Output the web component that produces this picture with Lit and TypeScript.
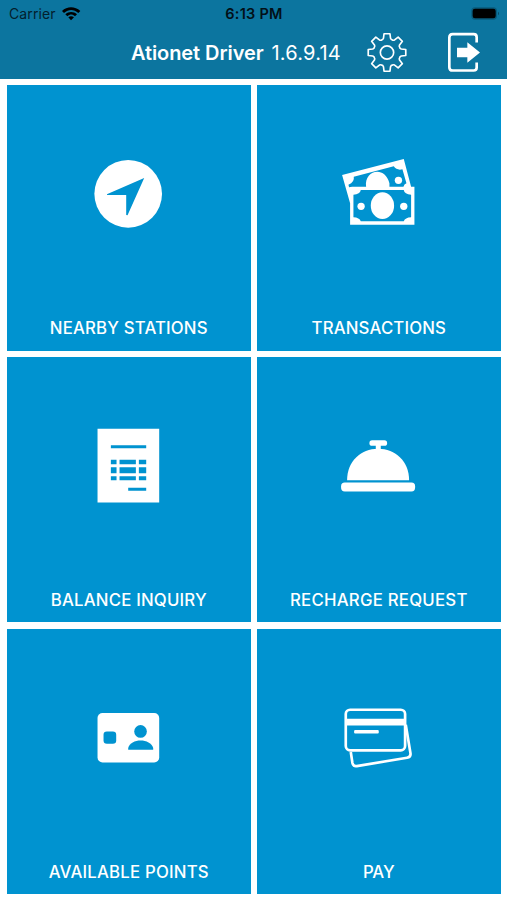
import { LitElement, html, svg, css } from "lit";
import { customElement } from "lit/decorators.js";

function gearPath(cx: number, cy: number): string {
  const parts: string[] = [];
  const at = (deg: number, r: number) => {
    const a = ((deg - 90) * Math.PI) / 180;
    return `${(cx + r * Math.cos(a)).toFixed(1)} ${(cy + r * Math.sin(a)).toFixed(1)}`;
  };
  for (let i = 0; i < 8; i++) {
    const d = i * 45;
    parts.push(`${i ? "L" : "M"}${at(d - 9, 57)}L${at(d + 9, 57)}L${at(d + 14, 44)}Q${at(d + 18, 40)} ${at(d + 22.5, 41)}Q${at(d + 27, 40)} ${at(d + 31, 44)}`);
  }
  return parts.join("") + "Z";
}

const tiles = [
  {
    label: "NEARBY STATIONS", spacing: 0.16, box: "-3.6 -3 270 270",
    icon: svg`<circle cx="129" cy="131.500" r="101.500"/><path class="cut" d="M177 84 L65 133 L66 135 H123 V195 L127 196 Z"/>`,
  },
  {
    label: "TRANSACTIONS", spacing: 0.14, box: "11.7 -3 270 270",
    icon: svg`<path d="M36 75 L221 27 L243 110 L253 110 V224 H60 V160 Z"/>
      <path class="cut" d="M55 104 Q74 96 71 80 L191 49 Q200 62 217 58 L229 100 Q222 102 220 110 H66 L57 112 Z"/>
      <path d="M108 110 C101 60 165 45 178 100 L178 112 H108 Z"/><circle cx="205" cy="91" r="11"/>
      <path class="cut" d="M92 120 H221 Q223 133 243 134 V202 Q225 203 221 214 H92 Q88 203 70 202 V134 Q90 133 92 120Z"/>
      <ellipse cx="157" cy="167" rx="35" ry="40"/><circle cx="93" cy="169" r="11"/><circle cx="221" cy="169" r="11"/>`,
  },
  {
    label: "BALANCE INQUIRY", spacing: 0.2, box: "-3.6 2.4 270 270",
    icon: svg`<path d="M37 26H222V247H37Z"/>
      <path class="cut" d="M77 75H183V84H77Z M77 119H94V132H77Z M103 119H152V132H103Z M161 119H183V132H161Z M77 141H94V159H77Z M103 141H152V159H103Z M161 141H183V159H161Z M77 168H94V180H77Z M103 168H152V180H103Z M161 168H183V180H161Z M129 203H183V212H129Z"/>`,
  },
  {
    label: "RECHARGE REQUEST", spacing: 0.23, box: "11.7 -27.6 270 270",
    icon: svg`<rect x="118" y="30" width="53" height="17" rx="8"/><path d="M137 44H152V60H137Z"/>
      <path d="M51 150 C51 94 92 56 144 56 S237 94 237 150Z"/><rect x="33" y="157" width="222" height="27" rx="11"/>`,
  },
  {
    label: "AVAILABLE POINTS", spacing: 0.2, box: "-3.6 -22.2 270 270",
    icon: svg`<rect x="37" y="38" width="185" height="148" rx="15"/>
      <g class="cut"><rect x="55" y="93" width="38" height="37" rx="10"/><circle cx="166" cy="93" r="19"/>
      <path d="M129 148 V143 C136 113 196 113 204 143 V148Z"/></g>`,
  },
  {
    label: "PAY", spacing: 0, box: "11.7 -7.2 270 270",
    icon: svg`<g class="line"><path d="M62 170 L67 203 Q69 214 80 212 L231 187 Q243 185 241 173 L227 88"/>
      <rect x="47" y="43" width="178" height="122" rx="13"/></g>
      <path d="M45 70H227V90H45Z"/><rect x="72" y="104" width="74" height="10" rx="3"/>`,
  },
];

@customElement("app-root")
export class AppRoot extends LitElement {
  static styles = css`
    :host { display: block; width: 507px; height: 900px; background: #fff; color: #fff; overflow: hidden;
      font-family: Inter, "Liberation Sans", sans-serif; }
    .header { height: 79px; background: #0c759f; }
    .status { height: 27px; box-sizing: border-box; padding: 0 8px 0 9px; display: grid;
      grid-template-columns: 1fr auto 1fr; align-items: center; color: #03202d; font-size: 14px; line-height: 28px; }
    .carrier { display: flex; align-items: center; gap: 6px; letter-spacing: 0.1px; }
    .carrier svg { position: relative; top: -1px; left: -1px; }
    .time { color: #021018; font-weight: 600; font-size: 14.5px; letter-spacing: 0.25px; }
    .battery { justify-self: end; margin: -1px -2px 0 0; }
    .nav { height: 52px; display: flex; align-items: center; padding-left: 131px; }
    .title { width: 234px; white-space: nowrap; font-size: 20px; line-height: 52px; letter-spacing: 0.2px; }
    .name { font-weight: 600; letter-spacing: -0.08px; }
    .version { margin-left: 8px; }
    .exit { margin-left: 36px; }
    .header svg { display: block; flex: none; }
    .outline { fill: none; stroke: #fff; }
    .solid { fill: #fff; }
    .grid { display: grid; grid-template-columns: 243.6px 243.6px; grid-template-rows: repeat(3, 265.5px);
      gap: 6.3px 6.4px; padding: 6px 0 0 7px; }
    .tile { background: #0093d0; display: flex; flex-direction: column; align-items: center; }
    .icon { width: 90px; height: 90px; margin-top: 64px; fill: #fff; flex: none; }
    .icon .cut { fill: #0093d0; }
    .icon .line { fill: none; stroke: #fff; stroke-width: 8; }
    .label { margin-top: 78px; font-size: 16.8px; font-weight: 550; line-height: 22px; white-space: nowrap; }
  `;

  render() {
    return html`
      <div class="header">
        <div class="status">
          <div class="carrier"><span>Carrier</span>
            <svg width="20" height="15" viewBox="183 16 60 45">
              <path d="M186 31 C201 16 225 16 241 31 L235 37 C221 25 206 25 192 37Z M196 41 C206 32 221 32 231 41 L225 47 C217 40 210 40 202 47Z M205 50 Q213 44 222 50 L213 59Z"/>
            </svg>
          </div>
          <span class="time">6:13 PM</span>
          <svg class="battery" width="31" height="15" viewBox="660 17 93 45">
            <rect x="664" y="21" width="77" height="37" rx="11" fill="#085b7c"/>
            <rect x="668" y="25" width="69" height="29" rx="7" fill="#000"/>
            <path d="M744 34 Q750 39 744 45Z" fill="#074a66"/>
          </svg>
        </div>
        <div class="nav">
          <div class="title"><span class="name">Ationet Driver</span><span class="version">1.6.9.14</span></div>
          <svg width="44" height="44" viewBox="345 91.500 132 132">
            <g class="outline" stroke-width="5" stroke-linejoin="round"><path d=${gearPath(411, 156)}/><circle cx="411" cy="156" r="20"/></g>
          </svg>
          <svg class="exit" width="40" height="44" viewBox="585 91.500 120 132">
            <path class="outline" stroke-width="8" d="M680 126 V110 Q680 101 671 101 H608 Q598 101 598 111 V200 Q598 210 608 210 H671 Q680 210 680 201 V186"/>
            <path class="solid" d="M621 142H652V125L690 156L652 187V170H621Z"/>
          </svg>
        </div>
      </div>
      <div class="grid">
        ${tiles.map((t) => html`<div class="tile">
          <svg class="icon" viewBox=${t.box}>${t.icon}</svg>
          <div class="label" style="letter-spacing:${t.spacing}px">${t.label}</div>
        </div>`)}
      </div>`;
  }
}
